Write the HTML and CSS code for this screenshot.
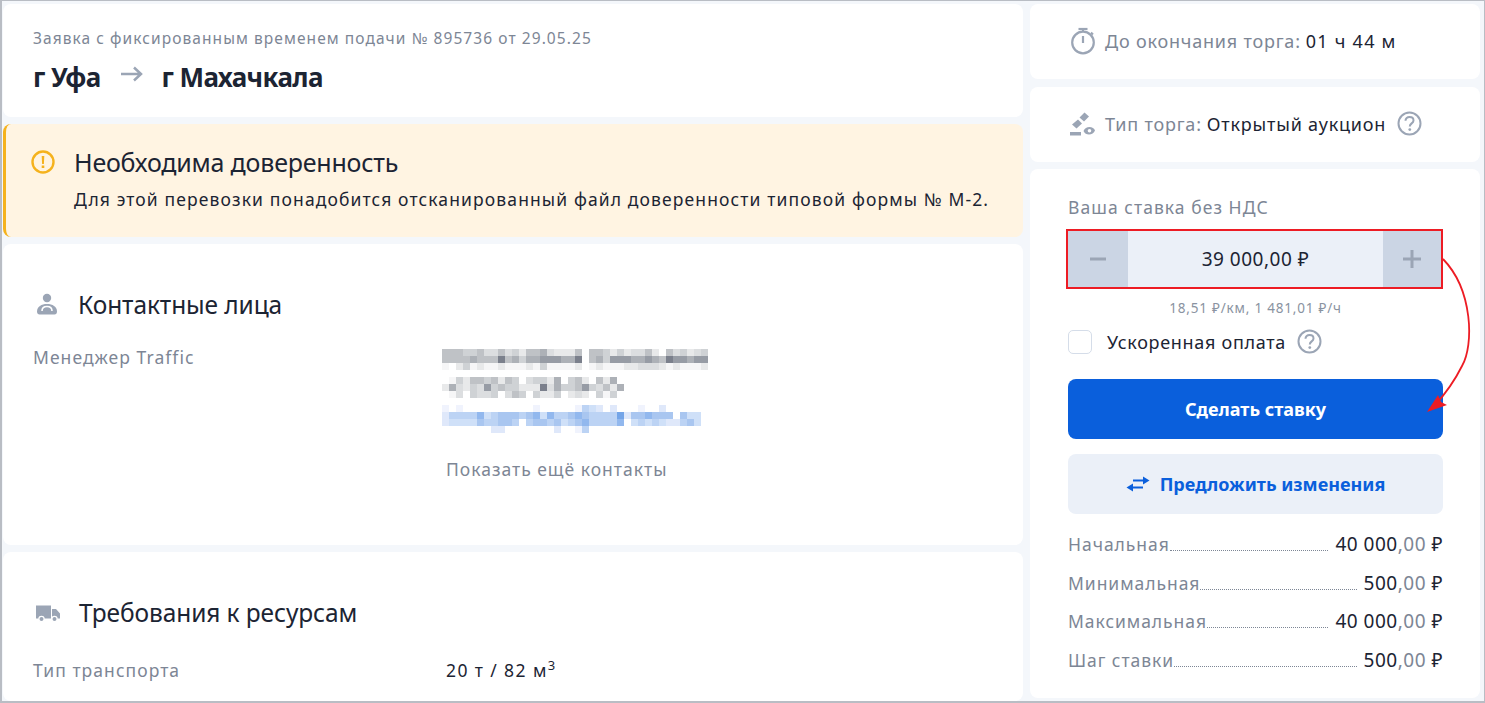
FILE: index.html
```html
<!DOCTYPE html>
<html lang="ru">
<head>
    <meta charset="UTF-8">
    <title>Заявка № 895736</title>
    <link rel="stylesheet" href="styles.css">
</head>
<body>

<div class="window">

    <!-- Left column -->
    <div class="main">
        <div class="card head-card">
            <div class="order-no">Заявка с фиксированным временем подачи № 895736 от 29.05.25</div>
            <div class="route">
                <span>г Уфа</span>
                <svg class="route-arrow" width="24" height="16" viewBox="0 0 24 16"><path d="M1 8h20M14 1.500l7 6.500-7 6.500" fill="none" stroke="#9ba5b5" stroke-width="2.500"/></svg>
                <span>г Махачкала</span>
            </div>
        </div>

        <div class="notice">
            <svg class="notice-icon" width="24" height="24" viewBox="0 0 24 24"><circle cx="12" cy="12" r="10.500" fill="none" stroke="#f5b21d" stroke-width="2.400"/><path d="M10.700 6h2.600l-.4 8h-1.800zM10.700 15.500h2.600v2.600h-2.600z" fill="#f5b21d"/></svg>
            <div>
                <div class="notice-title">Необходима доверенность</div>
                <div class="notice-text">Для этой перевозки понадобится отсканированный файл доверенности типовой формы № М-2.</div>
            </div>
        </div>

        <div class="card contacts-card">
            <div class="section-title">
                <svg width="22" height="24" viewBox="0 0 22 24"><circle cx="11" cy="5" r="4.200" fill="#9ba5b5"/><path d="M1 18.500c0-5 4.500-7.500 10-7.500s10 2.500 10 7.500c0 2-1 3-2.500 3h-15c-1.500 0-2.500-1-2.500-3z" fill="#9ba5b5"/><path d="M6 18c0-3 2.200-4.500 5-4.500s5 1.500 5 4.500" fill="none" stroke="#fff" stroke-width="1.600"/></svg>
                <span>Контактные лица</span>
            </div>
            <div class="info-row">
                <div class="info-label">Менеджер Traffic</div>
                <div class="blurred">
                    <div class="mosaic mosaic-name">
                        <i class="g4"></i><i class="g4"></i><i class="g4"></i><i class="g3"></i><i class="g3"></i><i class="g4"></i><i class="g2"></i><i class="g2"></i><i class="g4"></i><i class="g2"></i><i class="g3"></i><i class="g1"></i><i class="g4"></i><i class="g4"></i><i class="g5"></i><i class="g2"></i><i class="g1"></i><i class="g1"></i><i class="g1"></i><i class="g4"></i><i></i><i class="g4"></i><i class="g4"></i><i class="g3"></i><i class="g1"></i><i class="g3"></i><i class="g1"></i><i class="g2"></i><i class="g2"></i><i class="g4"></i><i class="g1"></i><i></i><i class="g4"></i><i class="g2"></i><i class="g3"></i><i class="g1"></i><i class="g2"></i><i class="g3"></i>
                        <i class="g4"></i><i class="g4"></i><i class="g4"></i><i class="g4"></i><i class="g5"></i><i class="g4"></i><i class="g4"></i><i class="g4"></i><i class="g7"></i><i class="g4"></i><i class="g5"></i><i class="g3"></i><i class="g5"></i><i class="g5"></i><i class="g6"></i><i class="g6"></i><i class="g6"></i><i class="g5"></i><i class="g5"></i><i class="g7"></i><i></i><i class="g4"></i><i class="g5"></i><i class="g3"></i><i class="g6"></i><i class="g6"></i><i class="g6"></i><i class="g5"></i><i class="g5"></i><i class="g6"></i><i class="g5"></i><i class="g4"></i><i class="g7"></i><i class="g6"></i><i class="g6"></i><i class="g5"></i><i class="g6"></i><i class="g6"></i>
                        <i class="g0"></i><i></i><i class="g1"></i><i class="g3"></i><i class="g0"></i><i class="g1"></i><i class="g0"></i><i class="g0"></i><i class="g1"></i><i class="g0"></i><i class="g0"></i><i class="g0"></i><i class="g1"></i><i class="g0"></i><i class="g3"></i><i class="g0"></i><i class="g0"></i><i class="g0"></i><i class="g0"></i><i class="g1"></i><i></i><i class="g0"></i><i class="g1"></i><i class="g0"></i><i class="g0"></i><i class="g0"></i><i class="g1"></i><i class="g1"></i><i class="g2"></i><i class="g2"></i><i class="g2"></i><i class="g1"></i><i class="g0"></i><i class="g1"></i><i class="g0"></i><i class="g0"></i><i class="g0"></i><i class="g1"></i>
                    </div>
                    <div class="mosaic mosaic-phone">
                        <i></i><i class="g0"></i><i class="g3"></i><i class="g1"></i><i class="g4"></i><i class="g4"></i><i class="g3"></i><i class="g4"></i><i class="g1"></i><i class="g4"></i><i class="g3"></i><i></i><i class="g2"></i><i class="g3"></i><i class="g3"></i><i class="g1"></i><i class="g5"></i><i></i><i class="g3"></i><i class="g4"></i><i class="g1"></i><i></i><i class="g4"></i><i class="g1"></i><i class="g5"></i><i></i>
                        <i class="g1"></i><i class="g5"></i><i class="g2"></i><i class="g1"></i><i class="g3"></i><i class="g2"></i><i class="g6"></i><i class="g3"></i><i class="g4"></i><i class="g3"></i><i class="g3"></i><i class="g1"></i><i class="g1"></i><i class="g1"></i><i class="g7"></i><i class="g2"></i><i class="g5"></i><i class="g3"></i><i class="g3"></i><i class="g4"></i><i class="g6"></i><i class="g3"></i><i class="g2"></i><i class="g4"></i><i class="g1"></i><i class="g5"></i>
                        <i></i><i class="g0"></i><i class="g2"></i><i></i><i class="g3"></i><i class="g2"></i><i class="g2"></i><i class="g3"></i><i></i><i class="g2"></i><i class="g4"></i><i class="g3"></i><i></i><i class="g3"></i><i class="g1"></i><i class="g1"></i><i class="g3"></i><i></i><i class="g1"></i><i class="g2"></i><i class="g1"></i><i></i><i class="g3"></i><i class="g0"></i><i class="g3"></i><i></i>
                    </div>
                    <div class="mosaic mosaic-mail">
                        <i class="b0"></i><i></i><i class="b0"></i><i></i><i></i><i></i><i></i><i></i><i></i><i></i><i></i><i></i><i></i><i class="b0"></i><i></i><i></i><i></i><i></i><i></i><i class="b0"></i><i class="b3"></i><i class="b2"></i><i class="b1"></i><i></i><i class="b1"></i><i></i><i></i><i></i><i class="b0"></i><i></i><i></i><i class="b1"></i><i></i><i></i><i></i><i></i><i></i>
                        <i class="b1"></i><i class="b3"></i><i class="b3"></i><i class="b3"></i><i class="b3"></i><i class="b5"></i><i class="b2"></i><i class="b3"></i><i class="b4"></i><i class="b4"></i><i class="b4"></i><i class="b3"></i><i class="b4"></i><i class="b5"></i><i class="b2"></i><i class="b5"></i><i class="b3"></i><i class="b3"></i><i class="b4"></i><i class="b5"></i><i class="b4"></i><i class="b3"></i><i class="b3"></i><i class="b3"></i><i class="b3"></i><i class="b6"></i><i class="b1"></i><i class="b4"></i><i class="b4"></i><i class="b5"></i><i class="b4"></i><i class="b4"></i><i class="b4"></i><i></i><i class="b4"></i><i class="b2"></i><i class="b2"></i>
                        <i class="b1"></i><i class="b2"></i><i class="b2"></i><i class="b2"></i><i class="b2"></i><i class="b4"></i><i class="b3"></i><i class="b3"></i><i class="b4"></i><i class="b4"></i><i class="b3"></i><i></i><i class="b3"></i><i class="b4"></i><i class="b4"></i><i class="b3"></i><i class="b4"></i><i class="b2"></i><i class="b3"></i><i class="b4"></i><i class="b5"></i><i class="b3"></i><i class="b3"></i><i class="b3"></i><i class="b3"></i><i class="b5"></i><i></i><i class="b2"></i><i class="b3"></i><i class="b2"></i><i class="b3"></i><i class="b2"></i><i class="b1"></i><i class="b1"></i><i class="b3"></i><i class="b4"></i><i class="b2"></i>
                        <i></i><i></i><i></i><i></i><i></i><i></i><i></i><i class="b1"></i><i class="b1"></i><i></i><i></i><i></i><i></i><i></i><i></i><i></i><i class="b1"></i><i></i><i></i><i class="b0"></i><i class="b3"></i>
                    </div>
                </div>
            </div>
            <div class="more-link">Показать ещё контакты</div>
        </div>

        <div class="card resources-card">
            <div class="section-title title-truck">
                <svg width="24" height="20" viewBox="0 0 24 20"><path d="M0 2.500h15v13h-15zM16 6h4l4 4.500v5h-8z" fill="#9ba5b5"/><circle cx="5.500" cy="16" r="2.600" fill="#9ba5b5" stroke="#fff" stroke-width="1.200"/><circle cx="18.500" cy="16" r="2.600" fill="#9ba5b5" stroke="#fff" stroke-width="1.200"/></svg>
                <span>Требования к ресурсам</span>
            </div>
            <div class="info-row">
                <div class="info-label">Тип транспорта</div>
                <div class="info-value">20 т / 82 м<sup>3</sup></div>
            </div>
        </div>
    </div>

    <!-- Right column -->
    <div class="side">
        <div class="card side-line timer-line">
            <svg width="26" height="28" viewBox="0 0 26 28"><circle cx="13" cy="15.500" r="10.800" fill="none" stroke="#9ba5b5" stroke-width="2.200"/><path d="M8.500 2h9" stroke="#9ba5b5" stroke-width="2.200"/><path d="M13 2v3M21 5.500l2 2" stroke="#9ba5b5" stroke-width="2"/><path d="M13 9v7" stroke="#9ba5b5" stroke-width="2.200"/></svg>
            <span class="side-muted">До окончания торга:</span>
            <span class="side-dark">01 ч 44 м</span>
        </div>

        <div class="card side-line auction-line">
            <svg width="26" height="26" viewBox="0 0 26 26"><path d="M9.500 6.500L14.500 1.500L19 5.500L14 10.500zM2 13.500L8 8.500L12 12.500L6.500 17.500z" fill="#9ba5b5"/><path d="M0 21h11v3.500h-11z" fill="#9ba5b5"/><path d="M13.500 20c1-2.800 3.500-4 6-4s4.800 1.500 5.500 3.500c-1 2.500-3.500 4-6 4s-4.500-1-5.500-3.500z" fill="#9ba5b5"/><circle cx="19.500" cy="19.800" r="1.800" fill="#fff"/></svg>
            <span class="side-muted">Тип торга:</span>
            <span class="side-dark">Открытый аукцион</span>
            <svg class="help" width="25" height="25" viewBox="0 0 25 25"><circle cx="12.500" cy="12.500" r="11" fill="none" stroke="#9ba5b5" stroke-width="2"/><path d="M8.500 9.800c0-2.400 1.800-3.800 4-3.800s4 1.300 4 3.400c0 3-3.700 3-3.700 6" fill="none" stroke="#9ba5b5" stroke-width="2"/><circle cx="12.800" cy="18.600" r="1.400" fill="#9ba5b5"/></svg>
        </div>

        <div class="card bid-card">
            <div class="bid-label">Ваша ставка без НДС</div>
            <div class="stepper">
                <div class="step-btn">
                    <svg width="18" height="18" viewBox="0 0 18 18"><path d="M1 9h16" stroke="#9ba5b5" stroke-width="3"/></svg>
                </div>
                <div class="step-value">39 000,00 ₽</div>
                <div class="step-btn step-plus">
                    <svg width="20" height="20" viewBox="0 0 20 20"><path d="M1 10h18M10 1v18" stroke="#9ba5b5" stroke-width="3"/></svg>
                </div>
            </div>
            <div class="bid-rate">18,51 ₽/км, 1 481,01 ₽/ч</div>
            <label class="fast-pay">
                <span class="checkbox"></span>
                <span>Ускоренная оплата</span>
                <svg class="help" width="25" height="25" viewBox="0 0 25 25"><circle cx="12.500" cy="12.500" r="11" fill="none" stroke="#9ba5b5" stroke-width="2"/><path d="M8.500 9.800c0-2.400 1.800-3.800 4-3.800s4 1.300 4 3.400c0 3-3.700 3-3.700 6" fill="none" stroke="#9ba5b5" stroke-width="2"/><circle cx="12.800" cy="18.600" r="1.400" fill="#9ba5b5"/></svg>
            </label>
            <button class="btn btn-primary">Сделать ставку</button>
            <button class="btn btn-light">
                <svg width="24" height="18" viewBox="0 0 24 18"><path d="M7 5.500h11" stroke="#0a5fdc" stroke-width="2"/><path d="M17 1.500l6.500 4-6.500 4z" fill="#0a5fdc"/><path d="M17 12.500h-11" stroke="#0a5fdc" stroke-width="2"/><path d="M7 8.500l-6.500 4 6.500 4z" fill="#0a5fdc"/></svg>
                <span>Предложить изменения</span>
            </button>
            <div class="price-list">
                <div class="price-row"><span class="price-name">Начальная</span><span class="dots"></span><span class="price-val">40 000<em>,00</em> ₽</span></div>
                <div class="price-row"><span class="price-name">Минимальная</span><span class="dots"></span><span class="price-val">500<em>,00</em> ₽</span></div>
                <div class="price-row"><span class="price-name">Максимальная</span><span class="dots"></span><span class="price-val">40 000<em>,00</em> ₽</span></div>
                <div class="price-row"><span class="price-name">Шаг ставки</span><span class="dots"></span><span class="price-val">500<em>,00</em> ₽</span></div>
            </div>
        </div>
    </div>

    <!-- Red annotation over the screenshot -->
    <svg class="annotation" width="1485" height="703" viewBox="0 0 1485 703">
        <path d="M1443 259C1473 290 1474 345 1462 366C1454 382 1447 392 1435 405" fill="none" stroke="#ed1c24" stroke-width="1.800"/>
        <path d="M1427 412L1438 395L1441 402L1447 405z" fill="#ed1c24"/>
    </svg>
</div>

</body>
</html>
```

FILE: styles.css
```css
* {
    box-sizing: border-box;
}

body {
    margin: 0;
    font-family: "Noto Sans", "Open Sans", sans-serif;
    color: #1c2433;
    overflow: hidden;
}

.window {
    position: relative;
    display: flex;
    gap: 7px;
    width: 1485px;
    height: 703px;
    padding: 3px 4px 0 1px;
    background-color: #f4f7fb;
    border: 1px solid #b9bdc4;
    border-left-width: 2px;
    border-bottom-width: 2px;
    overflow: hidden;
}

.card {
    background-color: #fff;
    border-radius: 8px;
}

/* Left column */
.main {
    width: 1020px;
    display: flex;
    flex-direction: column;
    gap: 7px;
    flex-shrink: 0;
}

.head-card {
    height: 113px;
    padding: 23px 30px 0;
}

.order-no {
    font-size: 15.500px;
    line-height: 22px;
    letter-spacing: 1.07px;
    color: #7d8695;
}

.route {
    display: flex;
    align-items: center;
    margin-top: 11px;
    font-size: 26px;
    line-height: 34px;
    font-weight: 700;
    letter-spacing: -0.6px;
}

.route-arrow {
    margin: 0 18px 6px 19px;
}

.notice {
    height: 113px;
    display: flex;
    gap: 19px;
    padding: 23px 25px 0;
    background-color: #fff4e2;
    border-left: 3px solid #f5b21d;
    border-radius: 8px;
}

.notice-icon {
    flex-shrink: 0;
    margin-top: 3px;
}

.notice-title {
    font-size: 25px;
    line-height: 30px;
    letter-spacing: -0.2px;
}

.notice-text {
    margin-top: 10px;
    font-size: 17.500px;
    line-height: 24px;
    letter-spacing: 1.12px;
    white-space: nowrap;
}

.contacts-card {
    height: 301px;
    padding: 46px 30px 0;
}

.resources-card {
    flex: 1;
    padding: 46px 30px 0;
}

.section-title {
    display: flex;
    align-items: center;
    gap: 20px;
    padding-left: 3px;
    font-size: 24.500px;
    line-height: 30px;
    letter-spacing: -0.1px;
}

.title-truck {
    gap: 19px;
}

.section-title svg {
    flex-shrink: 0;
}

.info-row {
    display: grid;
    grid-template-columns: 413px 1fr;
    margin-top: 25px;
    font-size: 17.500px;
    line-height: 24px;
}

.resources-card .info-row {
    margin-top: 30px;
}

.info-label {
    color: #7d8695;
    letter-spacing: 1.05px;
}

.info-value {
    letter-spacing: 1.4px;
}

.info-value sup {
    font-size: 13px;
    line-height: 0;
}

.blurred {
    display: flex;
    flex-direction: column;
    gap: 7px;
    margin: 4px 0 0 -4px;
}

.mosaic {
    display: grid;
    grid-auto-rows: 7px;
}

.mosaic-name { grid-template-columns: repeat(38, 7px); }
.mosaic-phone { grid-template-columns: repeat(26, 7px); }
.mosaic-mail { grid-template-columns: repeat(37, 7px); }

.mosaic i { display: block; }

.g0 { background-color: #f6f6f7; }
.g1 { background-color: #e8e9ea; }
.g2 { background-color: #dcdee0; }
.g3 { background-color: #cfd2d5; }
.g4 { background-color: #bfc2c6; }
.g5 { background-color: #adb1b7; }
.g6 { background-color: #979ca5; }
.g7 { background-color: #7b808c; }

.b0 { background-color: #f0f3fd; }
.b1 { background-color: #dfe8fa; }
.b2 { background-color: #cfe0f8; }
.b3 { background-color: #bcd3f4; }
.b4 { background-color: #a9c6f0; }
.b5 { background-color: #92b8ee; }
.b6 { background-color: #74a5e8; }

.more-link {
    margin: 24px 0 0 413px;
    font-size: 17.500px;
    line-height: 24px;
    color: #7d8695;
    letter-spacing: 1px;
}

/* Right column */
.side {
    width: 450px;
    display: flex;
    flex-direction: column;
    flex-shrink: 0;
}

.side-line {
    display: flex;
    align-items: center;
    padding: 0 0 2px 40px;
    font-size: 18px;
    letter-spacing: 0.8px;
}

.timer-line {
    height: 75px;
    margin-bottom: 8px;
}

.timer-line .side-dark {
    letter-spacing: 1.25px;
}

.auction-line {
    height: 75px;
    margin-bottom: 7px;
}

.side-line svg:first-child {
    margin-right: 9px;
}

.side-muted {
    color: #7d8695;
    margin-right: 5px;
}

.side-dark {
    color: #1c2433;
}

.side-line .help {
    margin-left: 11px;
}

.bid-card {
    height: 529px;
    padding: 26px 37px 0 38px;
}

.bid-label {
    font-size: 17.500px;
    line-height: 24px;
    color: #7d8695;
    letter-spacing: 1.05px;
}

.stepper {
    display: flex;
    height: 60px;
    margin: 10px 0 0 -2px;
    width: 377px;
    border: 2px solid #ed1c24;
    background-color: #ebf0f8;
}

.step-btn {
    width: 60px;
    display: flex;
    align-items: center;
    justify-content: center;
    background-color: #cbd5e4;
}

.step-plus {
    width: 58px;
}

.step-value {
    flex: 1;
    text-align: center;
    font-size: 19px;
    line-height: 56px;
    letter-spacing: 0.5px;
}

.bid-rate {
    margin-top: 10px;
    text-align: center;
    font-size: 13.500px;
    line-height: 18px;
    letter-spacing: 0.8px;
    color: #8a93a1;
}

.fast-pay {
    display: flex;
    align-items: center;
    margin-top: 12px;
    font-size: 18px;
    letter-spacing: 0.7px;
}

.checkbox {
    width: 24px;
    height: 24px;
    margin-right: 15px;
    background-color: #fff;
    border: 1px solid #d5dde9;
    border-radius: 5px;
}

.fast-pay .help {
    margin-left: 11px;
}

.btn {
    display: flex;
    align-items: center;
    justify-content: center;
    gap: 10px;
    width: 375px;
    height: 60px;
    border: none;
    border-radius: 8px;
    font-family: inherit;
    font-size: 18px;
    font-weight: 700;
}

.btn-primary {
    margin-top: 25px;
    background-color: #0a5fdc;
    color: #fff;
}

.btn-light {
    margin-top: 15px;
    background-color: #ebf0f8;
    color: #0a5fdc;
}

.price-list {
    margin-top: 11px;
}

.price-row {
    display: flex;
    align-items: baseline;
    height: 38.500px;
    line-height: 38px;
}

.price-name {
    font-size: 17.500px;
    color: #7d8695;
    letter-spacing: 0.95px;
}

.dots {
    flex: 1;
    margin: 0 7px 0 0;
    border-bottom: 1px dotted #7d8695;
}

.price-val {
    font-size: 19px;
    letter-spacing: 0.5px;
}

.price-val em {
    font-style: normal;
    color: #7d8695;
}

.annotation {
    position: absolute;
    top: -1px;
    left: -2px;
    pointer-events: none;
}
```
